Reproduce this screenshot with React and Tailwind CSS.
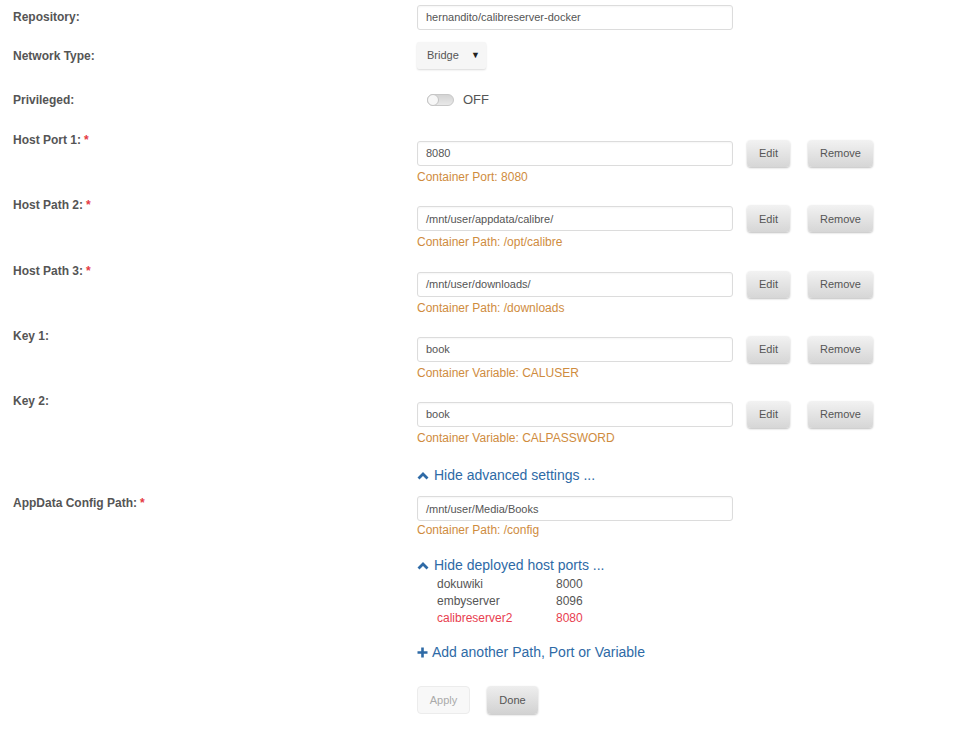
const font = { fontFamily: '"Liberation Sans", Arial, sans-serif' };

const rows = [
  { label: 'Host Port 1:', value: '8080', hint: 'Container Port: 8080' },
  { label: 'Host Path 2:', value: '/mnt/user/appdata/calibre/', hint: 'Container Path: /opt/calibre' },
  { label: 'Host Path 3:', value: '/mnt/user/downloads/', hint: 'Container Path: /downloads' },
  { label: 'Key 1:', value: 'book', hint: 'Container Variable: CALUSER' },
  { label: 'Key 2:', value: 'book', hint: 'Container Variable: CALPASSWORD' },
];

const ports = [
  { name: 'dokuwiki', port: '8000' },
  { name: 'embyserver', port: '8096' },
  { name: 'calibreserver2', port: '8080', hot: true },
];

function Label({ text, req }) {
  return (
    <div className="w-[404px] shrink-0 text-[12px] leading-[16px] font-bold text-[#555]">
      {text}
      {req && <span className="text-[#e53945] ml-[3px]">*</span>}
    </div>
  );
}

function TextBox({ value }) {
  return (
    <div className="w-[316px] h-[25px] border border-[#dcdcdc] rounded-[3px] bg-white shadow-[inset_0_1px_2px_rgba(0,0,0,0.04)] px-[8px] flex items-center text-[11px] text-[#555]">
      {value}
    </div>
  );
}

function GrayButton({ children, w }) {
  return (
    <div className={`${w} h-[27px] rounded-[4px] flex items-center justify-center text-[11px] text-[#555] bg-gradient-to-b from-[#f2f2f2] to-[#d6d6d6] shadow-[0_1px_2px_rgba(0,0,0,0.25)]`}>
      {children}
    </div>
  );
}

function ChevronUp() {
  return (
    <svg width="12" height="9" viewBox="0 0 12 9" className="mr-[5px]">
      <polyline points="1.5,7.5 6,3 10.5,7.5" fill="none" stroke="#2e6aa6" strokeWidth="2.8" />
    </svg>
  );
}

export default function App() {
  return (
    <div className="w-[962px] h-[750px] bg-white pl-[13px] pt-[5px] text-[#555]" style={font}>
      {/* Repository */}
      <div className="flex items-center h-[24px]">
        <Label text="Repository:" />
        <TextBox value="hernandito/calibreserver-docker" />
      </div>

      {/* Network type */}
      <div className="flex items-center h-[27px] mt-[13px]">
        <Label text="Network Type:" />
        <div className="w-[69px] h-[27px] bg-[#f6f6f6] rounded-[2px] shadow-[0_1px_2px_rgba(0,0,0,0.15)] flex items-center justify-between pl-[10px] pr-[6px] text-[11px] text-[#555]">
          <span>Bridge</span>
          <span className="text-[9px] text-[#222]">▼</span>
        </div>
      </div>

      {/* Privileged */}
      <div className="flex items-center h-[16px] mt-[23px]">
        <Label text="Privileged:" />
        <div className="flex items-center pl-[10px]">
          <div className="w-[27px] h-[12px] rounded-full bg-gradient-to-b from-[#d4d4d4] to-[#e8e8e8] border border-[#c8c8c8] relative">
            <div className="absolute left-[-1px] top-[-1px] w-[12px] h-[12px] rounded-full bg-[#f7f7f7] border border-[#c4c4c4]" />
          </div>
          <span className="ml-[9px] text-[13px] text-[#555]">OFF</span>
        </div>
      </div>

      {/* Host paths / ports / keys */}
      <div className="mt-[24px]">
        {rows.map((r, i) => (
          <div key={i} className="flex h-[65.3px]">
            <Label text={r.label} req={r.label.startsWith('Host')} />
            <div className="pt-[8px]">
              <div className="flex items-center">
                <TextBox value={r.value} />
                <div className="ml-[14px]"><GrayButton w="w-[43px]">Edit</GrayButton></div>
                <div className="ml-[18px]"><GrayButton w="w-[65px]">Remove</GrayButton></div>
              </div>
              <div className="text-[12px] leading-[16px] mt-[2px] text-[#cf8c3e]">{r.hint}</div>
            </div>
          </div>
        ))}
      </div>

      {/* Hide advanced */}
      <div className="flex items-center h-[18px] pl-[404px] mt-[8px] text-[14px] text-[#2e6aa6]">
        <ChevronUp />
        <span>Hide advanced settings ...</span>
      </div>

      {/* AppData */}
      <div className="flex mt-[11px]">
        <Label text="AppData Config Path:" req />
        <div className="pt-[1px]">
          <TextBox value="/mnt/user/Media/Books" />
          <div className="text-[12px] leading-[16px] mt-[1px] text-[#cf8c3e]">Container Path: /config</div>
        </div>
      </div>

      {/* Deployed ports */}
      <div className="pl-[404px] mt-[18px]">
        <div className="flex items-center h-[18px] text-[14px] text-[#2e6aa6]">
          <ChevronUp />
          <span>Hide deployed host ports ...</span>
        </div>
        <div className="pl-[20px] mt-[2px] text-[12px] leading-[17px]">
          {ports.map((p) => (
            <div key={p.name} className={`flex ${p.hot ? 'text-[#e8404f]' : 'text-[#555]'}`}>
              <span className="w-[119px]">{p.name}</span>
              <span>{p.port}</span>
            </div>
          ))}
        </div>

        <div className="flex items-center h-[18px] mt-[16px] text-[14px] text-[#2e6aa6]">
          <svg width="11" height="11" viewBox="0 0 11 11" className="mr-[4px]">
            <path d="M5.5 0.5v10M0.5 5.5h10" stroke="#2e6aa6" strokeWidth="2.6" />
          </svg>
          <span>Add another Path, Port or Variable</span>
        </div>

        <div className="flex mt-[25px]">
          <div className="w-[53px] h-[28px] rounded-[4px] bg-[#f8f8f8] border border-[#ececec] flex items-center justify-center text-[11px] text-[#aaa]">
            Apply
          </div>
          <div className="ml-[17px] w-[51px] h-[28px] rounded-[4px] bg-gradient-to-b from-[#eeeeee] to-[#d2d2d2] shadow-[0_1px_2px_rgba(0,0,0,0.25)] flex items-center justify-center text-[11px] text-[#555]">
            Done
          </div>
        </div>
      </div>
    </div>
  );
}
